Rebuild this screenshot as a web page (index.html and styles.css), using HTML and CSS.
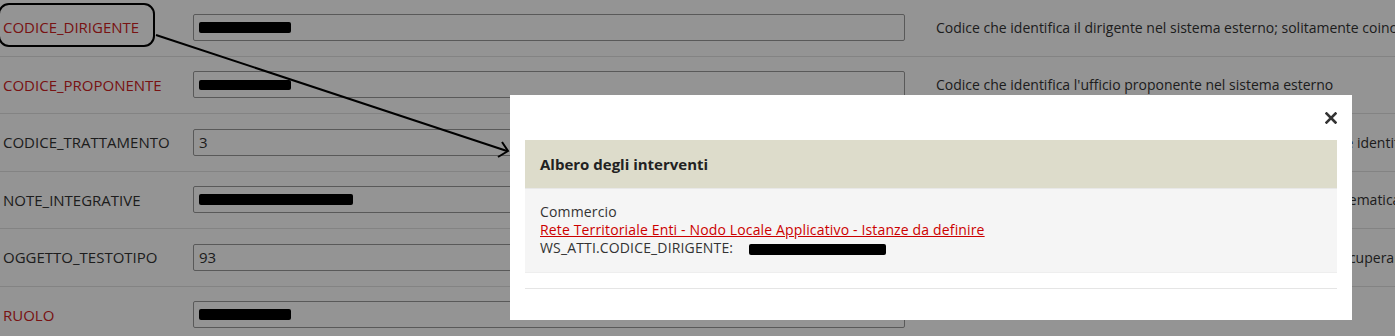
FILE: index.html
```html
<!DOCTYPE html>
<html lang="it">
<head>
    <meta charset="UTF-8">
    <title>Parametri atto</title>
    <link rel="stylesheet" href="styles.css">
</head>
<body>
<div id="params">
    <div class="row">
        <div class="label req">CODICE_DIRIGENTE</div>
        <div class="field"><span class="redact" style="width:92px"></span></div>
        <div class="desc">Codice che identifica il dirigente nel sistema esterno; solitamente coincide con la matricola</div>
    </div>
    <div class="row">
        <div class="label req">CODICE_PROPONENTE</div>
        <div class="field"><span class="redact thin" style="width:92px"></span></div>
        <div class="desc">Codice che identifica l'ufficio proponente nel sistema esterno</div>
    </div>
    <div class="row">
        <div class="label">CODICE_TRATTAMENTO</div>
        <div class="field">3</div>
        <div class="desc">Codice del trattamento dei dati personali associato all'atto e che identifica la finalità</div>
    </div>
    <div class="row">
        <div class="label">NOTE_INTEGRATIVE</div>
        <div class="field"><span class="redact" style="width:154px"></span></div>
        <div class="desc">Note integrative da riportare nel testo dell'atto, ed aggiunte sistematicamente in coda</div>
    </div>
    <div class="row">
        <div class="label">OGGETTO_TESTOTIPO</div>
        <div class="field">93</div>
        <div class="desc">Identificativo dell'oggetto del testo tipo da cui il sistema deve recuperare i dati</div>
    </div>
    <div class="row">
        <div class="label req">RUOLO</div>
        <div class="field"><span class="redact" style="width:92px"></span></div>
        <div class="desc">Codice che identifica il ruolo nel sistema esterno</div>
    </div>
</div>

<div id="overlay"></div>

<div id="dialog">
    <div class="dlg-top">
        <span class="close">
            <svg width="12" height="12" viewBox="0 0 12 12"><path d="M1.5 1.5 L10.5 10.5 M10.5 1.5 L1.5 10.5" stroke="#333" stroke-width="2.6" stroke-linecap="square"/></svg>
        </span>
    </div>
    <div class="panel">
        <div class="panel-head">Albero degli interventi</div>
        <div class="panel-body">
            <div>Commercio</div>
            <div><a href="#">Rete Territoriale Enti - Nodo Locale Applicativo - Istanze da definire</a></div>
            <div>WS_ATTI.CODICE_DIRIGENTE: <span class="redact value" style="width:137px"></span></div>
        </div>
    </div>
    <div class="dlg-foot"></div>
</div>

<svg id="marks" width="1395" height="336" viewBox="0 0 1395 336">
    <rect x="-1" y="4" width="155" height="42" rx="10" fill="none" stroke="#000" stroke-width="2"/>
    <line x1="156" y1="35" x2="507" y2="151" stroke="#000" stroke-width="2"/>
    <polyline points="502,142 508,151 498,157" fill="none" stroke="#000" stroke-width="2"/>
</svg>
</body>
</html>
```

FILE: styles.css
```css
*{
    margin: 0;
    padding: 0;
    box-sizing: border-box;
}
html,body{
    width: 1395px;
    height: 336px;
    overflow: hidden;
}
body{
    font-family: "Open Sans", "Noto Sans", sans-serif;
    font-size: 13px;
    color: #333;
    background: #fff;
    position: relative;
}
#params{
    margin-top: -1px;
}
.row{
    display: grid;
    grid-template-columns: 193px 712px 1fr;
    align-items: center;
    height: 57.5px;
    border-bottom: 1px solid #e2e2e2;
    white-space: nowrap;
}
.label{
    padding-left: 3px;
    font-size: 15px;
}
.label.req{
    color: #cf2222;
}
.field{
    height: 27px;
    border: 1px solid #9a9a9a;
    border-radius: 2px;
    padding-left: 5px;
    line-height: 25px;
    font-size: 15px;
    display: flex;
    align-items: center;
}
.desc{
    padding-left: 31px;
    font-size: 14px;
    overflow: hidden;
}
.redact{
    display: inline-block;
    height: 11px;
    background: #000;
    border-radius: 2px;
    vertical-align: middle;
}
.redact.thin{
    height: 10px;
}
.redact.value{
    margin-left: 12px;
}
#overlay{
    position: absolute;
    left: 0;
    top: 0;
    right: 0;
    bottom: 0;
    background: rgba(0,0,0,0.42);
}
#dialog{
    position: absolute;
    left: 510px;
    top: 95px;
    width: 842px;
    height: 225px;
    background: #fff;
    padding: 0 15px;
}
.dlg-top{
    height: 45px;
    display: flex;
    justify-content: flex-end;
    align-items: center;
}
.close{
    display: block;
    width: 12px;
    height: 12px;
}
.close svg{
    display: block;
}
.panel-head{
    height: 48px;
    line-height: 48px;
    background: #dddccb;
    padding-left: 15px;
    font-weight: bold;
    font-size: 15px;
    color: #222;
}
.panel-body{
    background: #f5f5f5;
    border-top: 1px solid #e8e8e8;
    border-bottom: 1px solid #eeeeee;
    padding: 14px 15px 15px;
    font-size: 14px;
    letter-spacing: 0.15px;
    line-height: 18px;
    white-space: nowrap;
}
.panel-body a{
    color: #cc0000;
}
.dlg-foot{
    margin-top: 15px;
    border-top: 1px solid #e5e5e5;
}
#marks{
    position: absolute;
    left: 0;
    top: 0;
}
```
